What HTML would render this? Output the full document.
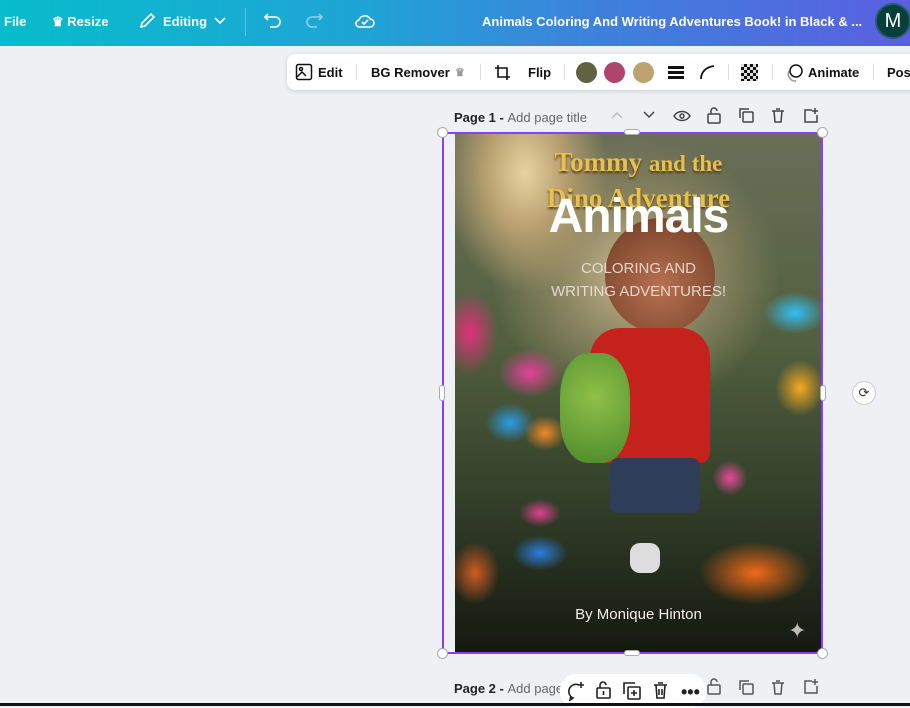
<!DOCTYPE html>
<html><head><meta charset="utf-8"><style>
*{margin:0;padding:0;box-sizing:border-box}
body{width:910px;height:706px;overflow:hidden;background:#eff0f4;font-family:"Liberation Sans",sans-serif;position:relative}
.top{position:absolute;left:0;top:0;width:910px;height:46px;background:linear-gradient(90deg,#07bccb 0%,#1fa4d5 40%,#3d82dc 65%,#5a5fe0 100%);color:#fff;font-weight:bold;font-size:13px}
.top span{position:absolute;top:14px}
.bar{position:absolute;left:287px;top:54px;width:640px;height:36px;background:#fff;border-radius:8px;box-shadow:0 1px 4px rgba(0,0,0,.15);font-size:13px;font-weight:bold;color:#111}
.bar span{position:absolute;top:11px}
.sep{position:absolute;top:10px;width:1px;height:16px;background:#ddd}
.dot{position:absolute;top:8px;width:21px;height:21px;border-radius:50%}
.ph{position:absolute;font-size:13px;color:#222;font-weight:bold}
.ph i{font-style:normal;font-weight:normal;color:#666}
.page{position:absolute;left:455px;top:133px;width:367px;height:520px;overflow:hidden;
background:
radial-gradient(ellipse 40px 60px at 15px 200px,#e0307a 0,transparent 70%),
radial-gradient(ellipse 45px 35px at 75px 240px,#e8409a 0,transparent 70%),
radial-gradient(ellipse 35px 28px at 55px 290px,#2a9de8 0,transparent 70%),
radial-gradient(ellipse 30px 25px at 90px 300px,#f08a28 0,transparent 70%),
radial-gradient(ellipse 30px 20px at 85px 380px,#e04090 0,transparent 70%),
radial-gradient(ellipse 40px 25px at 85px 420px,#2b7ee0 0,transparent 70%),
radial-gradient(ellipse 45px 30px at 340px 180px,#30c0f5 0,transparent 70%),
radial-gradient(ellipse 35px 40px at 345px 255px,#f5a820 0,transparent 70%),
radial-gradient(ellipse 25px 25px at 275px 345px,#e84a9a 0,transparent 70%),
radial-gradient(ellipse 80px 45px at 300px 440px,#f06a18 0,transparent 70%),
radial-gradient(ellipse 35px 45px at 20px 440px,#d05a20 0,transparent 70%),
radial-gradient(ellipse 110px 160px at 70px 40px,#e8d4a0 0,#b8a070 35%,transparent 75%),
radial-gradient(ellipse 170px 160px at 180px 140px,#c8b890 0,#8a8460 45%,transparent 85%),
linear-gradient(180deg,#6a6e58 0%,#52603f 40%,#33402a 70%,#15180f 100%);}
.sel{position:absolute;left:442px;top:132px;width:381px;height:522px;border:2px solid #8b3dff}
.h{position:absolute;width:11px;height:11px;border-radius:50%;background:#fff;border:1px solid #aaa}
.hb{position:absolute;background:#fff;border:1px solid #aaa;border-radius:4px}
</style></head><body>
<div class="top">
<span style="left:4px">File</span>
<span style="left:52px">♛ Resize</span>
<svg style="position:absolute;left:138px;top:12px" width="18" height="18" viewBox="0 0 18 18" fill="none" stroke="#fff" stroke-width="1.6"><path d="M3 15l1-4 9-9 3 3-9 9z"/></svg>
<span style="left:163px">Editing</span>
<svg style="position:absolute;left:214px;top:17px" width="12" height="8"><path d="M1 1l5 5 5-5" stroke="#fff" stroke-width="1.6" fill="none"/></svg>
<div style="position:absolute;left:245px;top:8px;width:1px;height:28px;background:rgba(255,255,255,.3)"></div>
<svg style="position:absolute;left:263px;top:12px" width="20" height="18" fill="none" stroke="#fff" stroke-width="1.6"><path d="M5 2L2 5l3 3M2 5h10a5 5 0 010 10H7"/></svg>
<svg style="position:absolute;left:304px;top:12px" width="20" height="18" fill="none" stroke="rgba(255,255,255,.5)" stroke-width="1.6"><path d="M15 2l3 3-3 3M18 5H8a5 5 0 000 10h5"/></svg>
<svg style="position:absolute;left:354px;top:11px" width="22" height="20" fill="none" stroke="#fff" stroke-width="1.6"><path d="M6 16h10a4 4 0 000-8 6 6 0 00-11 1 3.5 3.5 0 001 7z"/><path d="M8 11l2 2 4-4"/></svg>
<span style="left:482px">Animals Coloring And Writing Adventures Book! in Black &amp; ...</span>
<div style="position:absolute;left:875px;top:3px;width:36px;height:36px;border-radius:50%;background:#073f3a;border:2px solid #2a5a70;font-size:20px;font-weight:normal;text-align:center;line-height:32px">M</div>
</div>
<div class="bar">
<svg style="position:absolute;left:8px;top:9px" width="18" height="18" fill="none" stroke="#111" stroke-width="1.5"><rect x="1.5" y="1.5" width="15" height="15" rx="2"/><circle cx="6" cy="6" r="1.5"/><path d="M2 14l5-5 4 4"/></svg>
<span style="left:31px">Edit</span><div class="sep" style="left:69px"></div>
<span style="left:84px">BG Remover</span><span style="left:168px;color:#999;font-size:11px;top:12px">♛</span>
<div class="sep" style="left:193px"></div>
<svg style="position:absolute;left:207px;top:10px" width="18" height="17" fill="none" stroke="#111" stroke-width="1.6"><path d="M4 1v12h12M1 4h12v12"/></svg>
<span style="left:241px">Flip</span><div class="sep" style="left:277px"></div>
<div class="dot" style="left:289px;background:#5f6342"></div>
<div class="dot" style="left:317px;background:#b0456b"></div>
<div class="dot" style="left:346px;background:#bda36f"></div>
<div style="position:absolute;left:381px;top:12px;width:16px;height:3px;background:#111;box-shadow:0 5px 0 #111,0 10px 0 #111"></div>
<svg style="position:absolute;left:412px;top:10px" width="18" height="16" fill="none" stroke="#111" stroke-width="1.8"><path d="M2 15C2 8 7 3 15 2"/></svg>
<div class="sep" style="left:441px"></div>
<div style="position:absolute;left:454px;top:10px;width:17px;height:17px;background:repeating-conic-gradient(#111 0 25%,#ddd 0 50%) 0 0/6px 6px"></div>
<div class="sep" style="left:485px"></div>
<svg style="position:absolute;left:497px;top:9px" width="20" height="20" fill="none" stroke="#111" stroke-width="1.5"><circle cx="12" cy="8" r="6"/><path d="M5 8a7 7 0 007 10" stroke="#999"/></svg>
<span style="left:521px">Animate</span><div class="sep" style="left:586px"></div>
<span style="left:600px">Pos</span>
</div>
<div class="ph" style="left:454px;top:110px">Page 1 - <i>Add page title</i></div>
<svg style="position:absolute;left:611px;top:111px" width="12" height="8"><path d="M1 7l5-5 5 5" stroke="#bbb" stroke-width="1.5" fill="none"/></svg>
<svg style="position:absolute;left:643px;top:111px" width="12" height="8"><path d="M1 1l5 5 5-5" stroke="#444" stroke-width="1.5" fill="none"/></svg>
<svg style="position:absolute;left:673px;top:109px" width="18" height="14" fill="none" stroke="#444" stroke-width="1.5"><path d="M1 7c4-6 12-6 16 0-4 6-12 6-16 0z"/><circle cx="9" cy="7" r="2"/></svg>
<svg style="position:absolute;left:707px;top:107px" width="14" height="17" fill="none" stroke="#444" stroke-width="1.5"><rect x="1" y="7" width="12" height="9" rx="1"/><path d="M4 7V4a3 3 0 016 0"/></svg>
<svg style="position:absolute;left:739px;top:108px" width="15" height="15" fill="none" stroke="#444" stroke-width="1.5"><rect x="4" y="4" width="10" height="10" rx="1"/><path d="M1 10V1h9"/></svg>
<svg style="position:absolute;left:771px;top:108px" width="14" height="15" fill="none" stroke="#444" stroke-width="1.5"><path d="M1 3h12M3 3l1 11h6l1-11M5 1h4"/></svg>
<svg style="position:absolute;left:803px;top:107px" width="16" height="16" fill="none" stroke="#444" stroke-width="1.5"><path d="M9 3H2v12h12V8M12 1v6M9 4h6"/></svg>
<div class="page">
<div style="position:absolute;left:150px;top:85px;width:110px;height:115px;border-radius:50%;background:radial-gradient(circle at 50% 60%,#b87050,#6a3a25)"></div>
<div style="position:absolute;left:135px;top:195px;width:120px;height:135px;background:#c5221e;border-radius:30px 30px 10px 10px"></div>
<div style="position:absolute;left:105px;top:220px;width:70px;height:110px;background:radial-gradient(circle at 50% 40%,#8fc04a,#4a8a2a);border-radius:40%"></div>
<div style="position:absolute;left:155px;top:325px;width:90px;height:55px;background:#2e3d58;border-radius:8px"></div>
<div style="position:absolute;left:175px;top:410px;width:30px;height:30px;background:#ddd;border-radius:10px"></div>
<div style="position:absolute;left:0;right:0;top:12px;text-align:center;font-family:'Liberation Serif',serif;font-weight:bold;font-size:27px;line-height:34px;color:#e6c050;text-shadow:0 2px 2px #5a3a10">Tommy <span style="font-size:23px">and the</span><br>Dino Adventure</div>
<div style="position:absolute;left:0;right:0;top:56px;text-align:center;font-weight:bold;font-size:48px;color:#fff;letter-spacing:-1px;font-family:'Liberation Sans',sans-serif">Animals</div>
<div style="position:absolute;left:0;right:0;top:124px;text-align:center;font-size:15px;line-height:23px;color:#f1e8e0;opacity:.85;font-weight:300">COLORING AND<br>WRITING ADVENTURES!</div>
<div style="position:absolute;left:0;right:0;top:473px;text-align:center;font-size:15px;color:#f3eee6">By Monique Hinton</div>
<div style="position:absolute;left:333px;top:485px;color:#bbb;font-size:22px">✦</div>
</div>
<div class="sel"></div>
<div class="h" style="left:437px;top:127px"></div><div class="h" style="left:817px;top:127px"></div>
<div class="h" style="left:437px;top:648px"></div><div class="h" style="left:817px;top:648px"></div>
<div class="hb" style="left:624px;top:129px;width:16px;height:6px"></div>
<div class="hb" style="left:624px;top:650px;width:16px;height:6px"></div>
<div class="hb" style="left:439px;top:385px;width:6px;height:16px"></div>
<div class="hb" style="left:820px;top:385px;width:6px;height:16px"></div>
<div style="position:absolute;left:852px;top:381px;width:24px;height:24px;border-radius:50%;background:#fff;border:1px solid #ccc;text-align:center;line-height:22px;font-size:13px;color:#333">⟳</div>
<div class="ph" style="left:454px;top:681px">Page 2 - <i>Add page</i></div>
<div style="position:absolute;left:560px;top:674px;width:146px;height:34px;background:#fff;border-radius:16px"></div>
<svg style="position:absolute;left:565px;top:681px" width="22" height="20" fill="none" stroke="#222" stroke-width="1.6"><path d="M14 4a7 7 0 10-6 13l-3 2 1-4" /><path d="M16 1v6M13 4h6"/></svg>
<svg style="position:absolute;left:596px;top:680px" width="15" height="19" fill="none" stroke="#222" stroke-width="1.6"><rect x="1" y="8" width="13" height="10" rx="1"/><path d="M4 8V5a3 3 0 016 0M7.5 11v4"/></svg>
<svg style="position:absolute;left:623px;top:682px" width="18" height="18" fill="none" stroke="#222" stroke-width="1.6"><rect x="5" y="5" width="12" height="12" rx="1"/><path d="M1 12V1h11M11 8v6M8 11h6"/></svg>
<svg style="position:absolute;left:653px;top:681px" width="15" height="18" fill="none" stroke="#222" stroke-width="1.6"><path d="M1 4h13M3 4l1 13h7l1-13M5 2h5M6 8v6M9 8v6"/></svg>
<div style="position:absolute;left:681px;top:682px;font-size:18px;font-weight:bold;color:#222">•••</div>
<svg style="position:absolute;left:707px;top:678px" width="14" height="17" fill="none" stroke="#555" stroke-width="1.5"><rect x="1" y="7" width="12" height="9" rx="1"/><path d="M4 7V4a3 3 0 016 0"/></svg>
<svg style="position:absolute;left:739px;top:680px" width="15" height="15" fill="none" stroke="#555" stroke-width="1.5"><rect x="4" y="4" width="10" height="10" rx="1"/><path d="M1 10V1h9"/></svg>
<svg style="position:absolute;left:771px;top:680px" width="14" height="15" fill="none" stroke="#555" stroke-width="1.5"><path d="M1 3h12M3 3l1 11h6l1-11M5 1h4"/></svg>
<svg style="position:absolute;left:803px;top:678px" width="16" height="16" fill="none" stroke="#555" stroke-width="1.5"><path d="M9 3H2v12h12V8M12 1v6M9 4h6"/></svg>
<div style="position:absolute;left:0;top:703px;width:910px;height:3px;background:#111"></div>
</body></html>
